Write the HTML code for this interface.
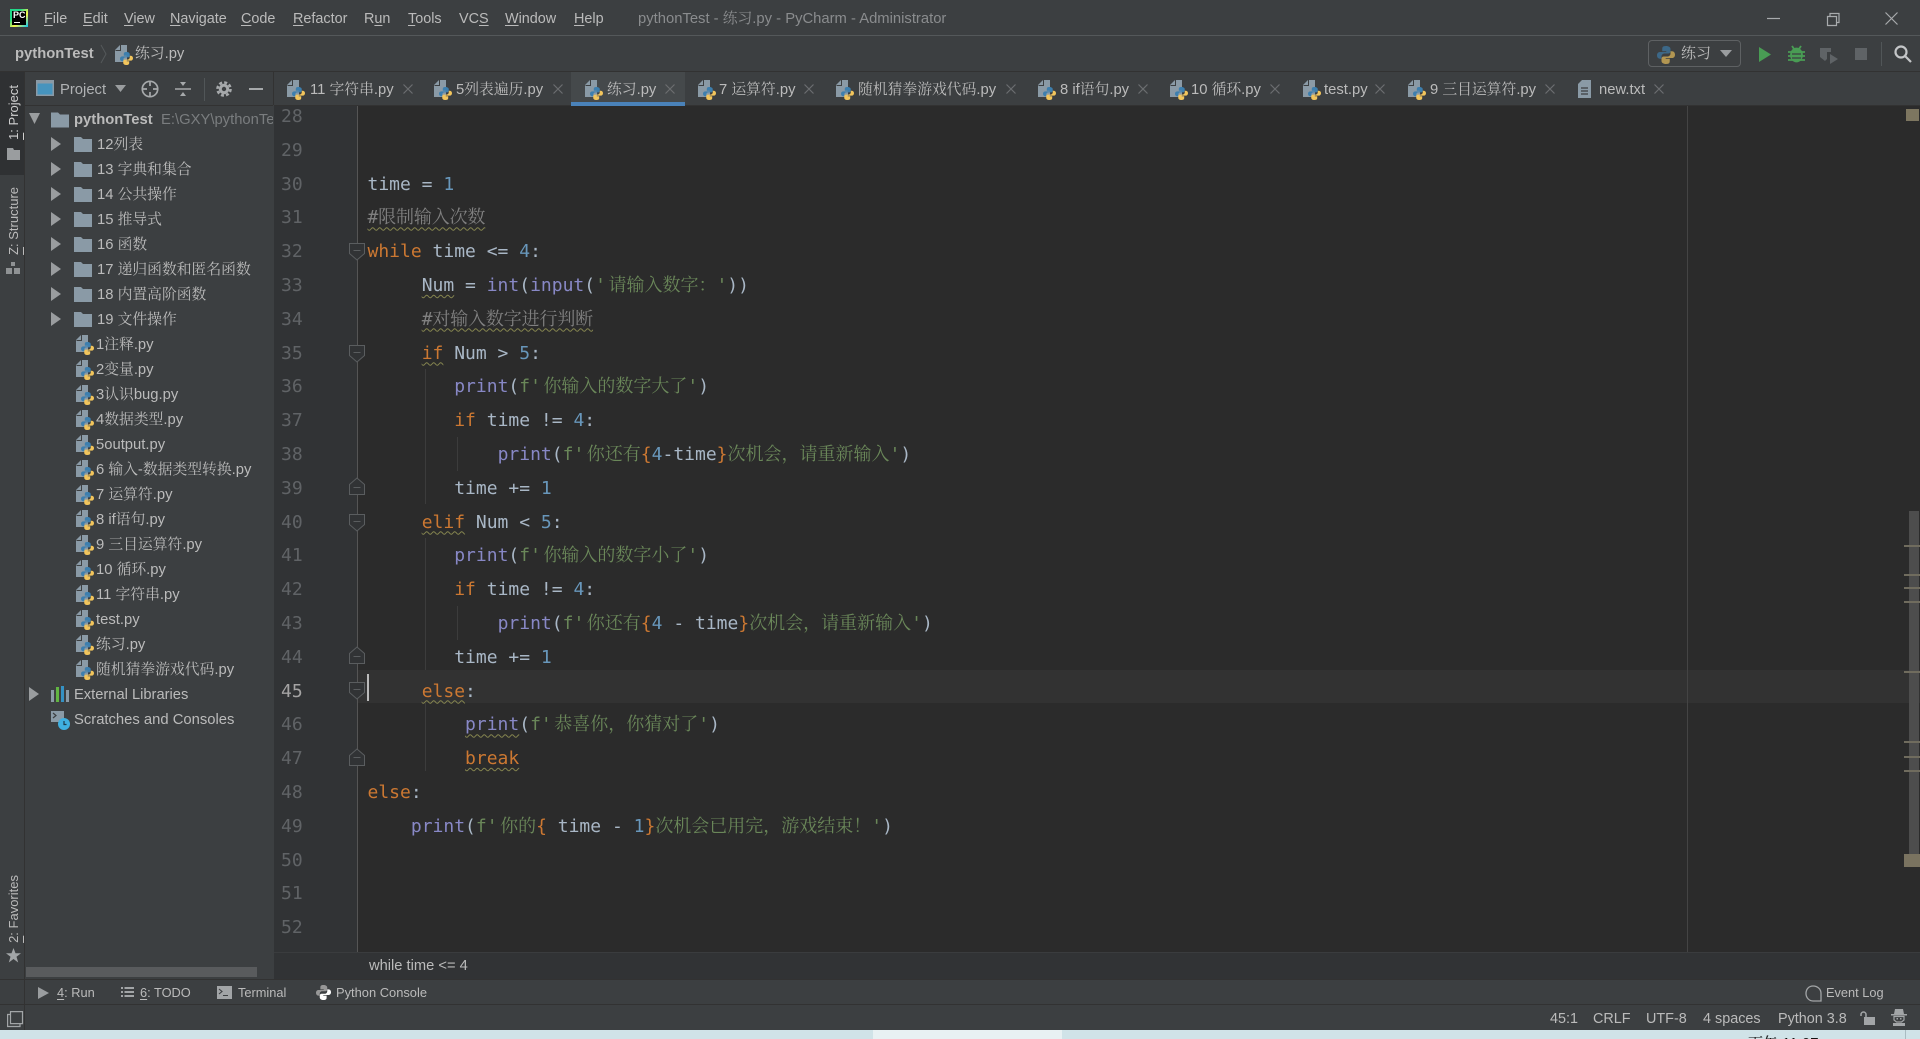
<!DOCTYPE html>
<html lang="zh-CN"><head><meta charset="utf-8"><title>pythonTest</title>
<style>
html,body{margin:0;padding:0;background:#3c3f41}
#r{position:relative;width:1920px;height:1039px;overflow:hidden;background:#3c3f41;font-family:"Liberation Sans","Noto Serif CJK SC",sans-serif;color:#bbb}
.a{position:absolute}
.t{position:absolute;white-space:pre;line-height:20px}
.m{font-size:14.4px;top:9px;color:#bbb}
.u{text-decoration:underline;text-decoration-thickness:1px;text-underline-offset:2px}
.tab{font-size:14.8px;top:79.5px;color:#bbb}
.tr{font-size:14.8px;color:#bbb;top:calc(110px + 25px*var(--i))}
.b{font-size:12.8px;top:983px;color:#bbb}
.s{font-size:14.4px;top:1008.5px;color:#bbb}
.ln{position:absolute;left:281px;font:18px/34px "DejaVu Sans Mono",monospace;color:#606366;top:calc(167.5px + 33.8px*(var(--n) - 30))}
.c{position:absolute;white-space:pre;font:18px/34px "DejaVu Sans Mono","Noto Serif CJK SC",monospace;color:#a9b7c6;top:calc(167.5px + 33.8px*(var(--n) - 30));left:calc(367.5px + 10.84px*var(--x))}
.k{color:#cc7832}.n{color:#6897bb}.f{color:#8888c6}.g{color:#6a8759}.h{color:#808080;letter-spacing:-.15px}
.q{margin-right:2.5px}
.w{text-decoration:underline wavy #85854f 1px;text-underline-offset:3px}
.v{position:absolute;writing-mode:vertical-rl;transform:rotate(180deg);font-size:13px;line-height:16px;white-space:pre;color:#bbb;left:6px}
svg{position:absolute;overflow:visible}
</style></head><body><div id="r">
<svg width="0" height="0" style="left:0;top:0"><defs>
<symbol id="py" viewBox="0 0 12 12" overflow="visible"><path fill="#3d7fae" d="M6 0C3.5 0 3.5 1 3.5 2.5V3.5H6.2V4H2C.7 4 0 5 0 6.2 0 7.5.7 8.5 2 8.5H3V7C3 5.8 4 5 5 5H7.5C8.3 5 9 4.4 9 3.5V2C9 .8 7.7 0 6 0Z"/><path fill="#f2c55c" d="M6 12C8.500 12 8.500 11 8.500 9.500V8.500H5.800V8H10C11.300 8 12 7 12 5.800 12 4.500 11.300 3.500 10 3.500H9V5C9 6.200 8 7 7 7H4.500C3.700 7 3 7.600 3 8.500V10C3 11.200 4.300 12 6 12Z"/></symbol>
<symbol id="pf" viewBox="0 0 18 20" overflow="visible"><path fill="#8a9aa6" d="M0 5L5 0H12V17H0Z"/><path fill="#3c3f41" d="M5 0V5H0L1 6H6V0Z"/><use href="#py" x="5" y="7" width="13" height="13"/></symbol>
<symbol id="fd" viewBox="0 0 18 16"><path fill="#8a9aa6" d="M0 1H7L9 3H18V16H0Z"/></symbol>
<symbol id="x" viewBox="0 0 10 10"><path stroke="#6b6e70" stroke-width="1.200" fill="none" d="M.5 .5L9.500 9.500M9.500 .5L.5 9.500"/></symbol>
<symbol id="ar" viewBox="0 0 10 14"><path fill="#9a9d9f" d="M0 0L10 7L0 14Z"/></symbol>
</defs></svg>

<!-- title bar -->
<div class="a" style="left:0;top:35px;width:1920px;height:1px;background:#54585a"></div>
<div class="a" style="left:10px;top:9px;width:18px;height:18px;background:linear-gradient(135deg,#21d789 0%,#21d789 30%,#fcf84a 60%,#07c3f2 100%)"></div>
<div class="a" style="left:12px;top:11px;width:14px;height:14px;background:#000"></div>
<div class="t" style="left:13px;top:9px;font-size:9px;font-weight:bold;color:#fff;line-height:12px">PC</div>
<div class="a" style="left:14px;top:22px;width:6px;height:1px;background:#fff"></div>
<span class="t m" style="left:44px"><span class="u">F</span>ile</span>
<span class="t m" style="left:83px"><span class="u">E</span>dit</span>
<span class="t m" style="left:124px"><span class="u">V</span>iew</span>
<span class="t m" style="left:170px"><span class="u">N</span>avigate</span>
<span class="t m" style="left:241px"><span class="u">C</span>ode</span>
<span class="t m" style="left:293px"><span class="u">R</span>efactor</span>
<span class="t m" style="left:364px">R<span class="u">u</span>n</span>
<span class="t m" style="left:408px"><span class="u">T</span>ools</span>
<span class="t m" style="left:459px">VC<span class="u">S</span></span>
<span class="t m" style="left:505px"><span class="u">W</span>indow</span>
<span class="t m" style="left:574px"><span class="u">H</span>elp</span>
<span class="t m" style="left:638px;color:#8a8c8e;font-size:14.8px">pythonTest - 练习.py - PyCharm - Administrator</span>
<svg style="left:1767px;top:12px" width="150" height="14" fill="none" stroke="#a8abad" stroke-width="1.200"><path d="M0 6.500H13"/><path d="M60.500 4.500h9v9h-9zM63 4.500v-3h9v9h-2.500"/><path d="M118.500 .5L130.500 12.500M130.500 .5L118.500 12.500"/></svg>

<!-- nav bar -->
<div class="a" style="left:0;top:71px;width:1920px;height:1px;background:#323232"></div>
<span class="t" style="left:15px;top:44px;font-size:14.8px;font-weight:bold;color:#bbb">pythonTest</span>
<svg style="left:100px;top:45px" width="8" height="18" fill="none" stroke="#55595b"><path d="M1 0L6 9L1 18"/></svg>
<svg style="left:115px;top:45px" width="18" height="20"><use href="#pf" width="18" height="20"/></svg>
<span class="t" style="left:135px;top:44px;font-size:14.8px">练习.py</span>
<div class="a" style="left:1648px;top:40px;width:91px;height:25px;border:1px solid #5e6163;border-radius:4px"></div>
<svg style="left:1657px;top:46px;opacity:.65" width="18" height="18"><use href="#py" width="18" height="18"/></svg>
<span class="t" style="left:1681px;top:44px;font-size:15px">练习</span>
<svg style="left:1720px;top:50px" width="12" height="8"><path fill="#9a9d9f" d="M0 0H12L6 7Z"/></svg>
<svg style="left:1759px;top:47px" width="12" height="15"><path fill="#499c54" d="M0 0L12 7.500L0 15Z"/></svg>
<svg style="left:1788px;top:45px" width="17" height="18" fill="none" stroke="#499c54" stroke-width="1.800"><ellipse cx="8.500" cy="10" rx="5.500" ry="6.500" fill="#499c54"/><path d="M4 1L6 4M13 1L11 4M0 7H17M0 11H17M0 15H17"/><path stroke="#3c3f41" stroke-width="1.200" d="M4 9H13M4 13H13"/></svg>
<svg style="left:1820px;top:47px" width="19" height="17"><path fill="#5f6366" d="M0 1H11V5H7V12L5 14L0 10Z"/><path fill="#5f6366" d="M10 7L18 12L10 17Z"/></svg>
<div class="a" style="left:1855px;top:48px;width:12px;height:12px;background:#5f6366"></div>
<div class="a" style="left:1881px;top:42px;width:1px;height:24px;background:#515658"></div>
<svg style="left:1894px;top:45px" width="18" height="18" fill="none" stroke="#c4c6c8" stroke-width="2.200"><circle cx="7" cy="7" r="5.500"/><path d="M11 11L17 17"/></svg>

<!-- left stripe -->
<div class="a" style="left:0;top:72px;width:24px;height:960px;border-right:1px solid #323232"></div>
<div class="a" style="left:0;top:72px;width:24px;height:103px;background:#2f3133"></div>
<span class="v" style="top:85px;color:#d0d0d0"><span class="u">1</span>: Project</span>
<svg style="left:7px;top:148px" width="13" height="12"><path fill="#9a9d9f" d="M0 0H6L7 2H13V12H0Z"/></svg>
<span class="v" style="top:187px"><span class="u">Z</span>: Structure</span>
<svg style="left:6px;top:262px" width="14" height="13" fill="#8f9294"><rect x="5" y="0" width="4" height="4"/><rect x="0" y="6" width="6" height="6"/><rect x="8" y="6" width="6" height="6"/></svg>
<span class="v" style="top:875px"><span class="u">2</span>: Favorites</span>
<svg style="left:6px;top:948px" width="15" height="15"><path fill="#a2a5a7" d="M7.500 0L9.500 5.300H15L10.500 8.700L12.200 14.500L7.500 11L2.800 14.500L4.500 8.700L0 5.300H5.500Z"/></svg>

<!-- project panel -->
<div class="a" style="left:25px;top:105px;width:248px;height:1px;background:#323232"></div>
<svg style="left:36px;top:80px" width="18" height="16"><rect width="18" height="16" fill="#8a9aa6"/><rect x="1.500" y="3.500" width="15" height="11" fill="#3592c4" opacity=".8"/></svg>
<span class="t" style="left:60px;top:79.5px;font-size:14.8px;color:#b0b2b4">Project</span>
<svg style="left:115px;top:85px" width="11" height="7"><path fill="#9a9d9f" d="M0 0H11L5.500 7Z"/></svg>
<svg style="left:141px;top:80px" width="18" height="18" fill="none" stroke="#a6a9ab" stroke-width="1.700"><circle cx="9" cy="9" r="7.700"/><path d="M9 1V6M9 12V17M1 9H6M12 9H17"/></svg>
<svg style="left:175px;top:81px" width="16" height="16"><path stroke="#a6a9ab" stroke-width="1.500" d="M0 8H16"/><path fill="#a6a9ab" d="M5 1H11L8 5ZM5 15H11L8 11Z"/></svg>
<div class="a" style="left:204px;top:78px;width:1px;height:23px;background:#515658"></div>
<svg style="left:216px;top:81px" width="16" height="16" fill="none"><circle cx="8" cy="8" r="3.700" stroke="#a6a9ab" stroke-width="3"/><circle cx="8" cy="8" r="6.500" stroke="#a6a9ab" stroke-width="2.600" stroke-dasharray="3 2.100"/></svg>
<div class="a" style="left:249px;top:88px;width:14px;height:2px;background:#a6a9ab"></div>

<div class="a" style="left:273px;top:72px;width:1px;height:33px;background:#323232"></div>
<svg style="left:29px;top:113px" width="11" height="11"><path fill="#9a9d9f" d="M0 0H11L5.500 11Z"/></svg>
<svg style="left:51px;top:111px" width="18" height="17"><use href="#fd" width="18" height="17"/></svg>
<span class="t tr" style="--i:0;left:74px;font-weight:bold">pythonTest</span>
<div class="a" style="left:161px;top:110px;width:112px;height:22px;overflow:hidden"><span class="t" style="left:0;top:0;font-size:14.8px;color:#7a7d7f">E:\GXY\pythonTest</span></div>

<svg style="left:51px;top:137px" width="10" height="14"><use href="#ar" width="10" height="14"/></svg><svg style="left:74px;top:136px" width="18" height="16"><use href="#fd" width="18" height="16"/></svg><span class="t tr" style="--i:1;left:97px">12列表</span>
<svg style="left:51px;top:162px" width="10" height="14"><use href="#ar" width="10" height="14"/></svg><svg style="left:74px;top:161px" width="18" height="16"><use href="#fd" width="18" height="16"/></svg><span class="t tr" style="--i:2;left:97px">13 字典和集合</span>
<svg style="left:51px;top:187px" width="10" height="14"><use href="#ar" width="10" height="14"/></svg><svg style="left:74px;top:186px" width="18" height="16"><use href="#fd" width="18" height="16"/></svg><span class="t tr" style="--i:3;left:97px">14 公共操作</span>
<svg style="left:51px;top:212px" width="10" height="14"><use href="#ar" width="10" height="14"/></svg><svg style="left:74px;top:211px" width="18" height="16"><use href="#fd" width="18" height="16"/></svg><span class="t tr" style="--i:4;left:97px">15 推导式</span>
<svg style="left:51px;top:237px" width="10" height="14"><use href="#ar" width="10" height="14"/></svg><svg style="left:74px;top:236px" width="18" height="16"><use href="#fd" width="18" height="16"/></svg><span class="t tr" style="--i:5;left:97px">16 函数</span>
<svg style="left:51px;top:262px" width="10" height="14"><use href="#ar" width="10" height="14"/></svg><svg style="left:74px;top:261px" width="18" height="16"><use href="#fd" width="18" height="16"/></svg><span class="t tr" style="--i:6;left:97px">17 递归函数和匿名函数</span>
<svg style="left:51px;top:287px" width="10" height="14"><use href="#ar" width="10" height="14"/></svg><svg style="left:74px;top:286px" width="18" height="16"><use href="#fd" width="18" height="16"/></svg><span class="t tr" style="--i:7;left:97px">18 内置高阶函数</span>
<svg style="left:51px;top:312px" width="10" height="14"><use href="#ar" width="10" height="14"/></svg><svg style="left:74px;top:311px" width="18" height="16"><use href="#fd" width="18" height="16"/></svg><span class="t tr" style="--i:8;left:97px">19 文件操作</span>

<svg style="left:76px;top:335px" width="18" height="20"><use href="#pf" width="18" height="20"/></svg><span class="t tr" style="--i:9;left:96px">1注释.py</span>
<svg style="left:76px;top:360px" width="18" height="20"><use href="#pf" width="18" height="20"/></svg><span class="t tr" style="--i:10;left:96px">2变量.py</span>
<svg style="left:76px;top:385px" width="18" height="20"><use href="#pf" width="18" height="20"/></svg><span class="t tr" style="--i:11;left:96px">3认识bug.py</span>
<svg style="left:76px;top:410px" width="18" height="20"><use href="#pf" width="18" height="20"/></svg><span class="t tr" style="--i:12;left:96px">4数据类型.py</span>
<svg style="left:76px;top:435px" width="18" height="20"><use href="#pf" width="18" height="20"/></svg><span class="t tr" style="--i:13;left:96px">5output.py</span>
<svg style="left:76px;top:460px" width="18" height="20"><use href="#pf" width="18" height="20"/></svg><span class="t tr" style="--i:14;left:96px">6 输入-数据类型转换.py</span>
<svg style="left:76px;top:485px" width="18" height="20"><use href="#pf" width="18" height="20"/></svg><span class="t tr" style="--i:15;left:96px">7 运算符.py</span>
<svg style="left:76px;top:510px" width="18" height="20"><use href="#pf" width="18" height="20"/></svg><span class="t tr" style="--i:16;left:96px">8 if语句.py</span>
<svg style="left:76px;top:535px" width="18" height="20"><use href="#pf" width="18" height="20"/></svg><span class="t tr" style="--i:17;left:96px">9 三目运算符.py</span>
<svg style="left:76px;top:560px" width="18" height="20"><use href="#pf" width="18" height="20"/></svg><span class="t tr" style="--i:18;left:96px">10 循环.py</span>
<svg style="left:76px;top:585px" width="18" height="20"><use href="#pf" width="18" height="20"/></svg><span class="t tr" style="--i:19;left:96px">11 字符串.py</span>
<svg style="left:76px;top:610px" width="18" height="20"><use href="#pf" width="18" height="20"/></svg><span class="t tr" style="--i:20;left:96px">test.py</span>
<svg style="left:76px;top:635px" width="18" height="20"><use href="#pf" width="18" height="20"/></svg><span class="t tr" style="--i:21;left:96px">练习.py</span>
<svg style="left:76px;top:660px" width="18" height="20"><use href="#pf" width="18" height="20"/></svg><span class="t tr" style="--i:22;left:96px">随机猜拳游戏代码.py</span>

<svg style="left:29px;top:687px" width="10" height="14"><use href="#ar" width="10" height="14"/></svg>
<svg style="left:51px;top:686px" width="18" height="16"><rect x="0" y="4" width="3" height="12" fill="#8a9aa6"/><rect x="5" y="1" width="3" height="15" fill="#62b543"/><rect x="10" y="0" width="3" height="16" fill="#3592c4"/><rect x="15" y="4" width="3" height="12" fill="#8a9aa6"/></svg>
<span class="t tr" style="--i:23;left:74px;font-size:14.7px">External Libraries</span>
<svg style="left:51px;top:711px" width="19" height="19"><rect width="13" height="11" fill="#8a9aa6"/><path stroke="#3c3f41" fill="none" stroke-width="1.200" d="M2 2L5 4.500L2 7"/><circle cx="13" cy="13" r="6" fill="#3fb0e0"/><path stroke="#1d3c4d" stroke-width="1.200" fill="none" d="M13 10V13.500H15.500"/></svg>
<span class="t tr" style="--i:24;left:74px">Scratches and Consoles</span>
<div class="a" style="left:26px;top:967px;width:231px;height:10px;background:#595b5d"></div>

<!-- tabs -->
<div class="a" style="left:274px;top:105px;width:1646px;height:1px;background:#323232"></div>
<div class="a" style="left:571px;top:72px;width:114px;height:30px;background:#45494b"></div>
<div class="a" style="left:571px;top:102px;width:114px;height:4px;background:#4a82b9"></div>
<svg style="left:287px;top:80px" width="18" height="20"><use href="#pf" width="18" height="20"/></svg><span class="t tab" style="left:310px">11 字符串.py</span><svg style="left:403px;top:84px" width="10" height="10"><use href="#x" width="10" height="10"/></svg>
<svg style="left:434px;top:80px" width="18" height="20"><use href="#pf" width="18" height="20"/></svg><span class="t tab" style="left:456px">5列表遍历.py</span><svg style="left:553px;top:84px" width="10" height="10"><use href="#x" width="10" height="10"/></svg>
<svg style="left:585px;top:80px" width="18" height="20"><use href="#pf" width="18" height="20"/></svg><span class="t tab" style="left:607px">练习.py</span><svg style="left:665px;top:84px" width="10" height="10"><use href="#x" width="10" height="10"/></svg>
<svg style="left:698px;top:80px" width="18" height="20"><use href="#pf" width="18" height="20"/></svg><span class="t tab" style="left:719px">7 运算符.py</span><svg style="left:804px;top:84px" width="10" height="10"><use href="#x" width="10" height="10"/></svg>
<svg style="left:836px;top:80px" width="18" height="20"><use href="#pf" width="18" height="20"/></svg><span class="t tab" style="left:858px">随机猜拳游戏代码.py</span><svg style="left:1006px;top:84px" width="10" height="10"><use href="#x" width="10" height="10"/></svg>
<svg style="left:1038px;top:80px" width="18" height="20"><use href="#pf" width="18" height="20"/></svg><span class="t tab" style="left:1060px">8 if语句.py</span><svg style="left:1138px;top:84px" width="10" height="10"><use href="#x" width="10" height="10"/></svg>
<svg style="left:1170px;top:80px" width="18" height="20"><use href="#pf" width="18" height="20"/></svg><span class="t tab" style="left:1191px">10 循环.py</span><svg style="left:1270px;top:84px" width="10" height="10"><use href="#x" width="10" height="10"/></svg>
<svg style="left:1303px;top:80px" width="18" height="20"><use href="#pf" width="18" height="20"/></svg><span class="t tab" style="left:1324px">test.py</span><svg style="left:1375px;top:84px" width="10" height="10"><use href="#x" width="10" height="10"/></svg>
<svg style="left:1408px;top:80px" width="18" height="20"><use href="#pf" width="18" height="20"/></svg><span class="t tab" style="left:1430px">9 三目运算符.py</span><svg style="left:1545px;top:84px" width="10" height="10"><use href="#x" width="10" height="10"/></svg>
<svg style="left:1578px;top:80px" width="13" height="18"><path fill="#8a9aa6" d="M0 4L4 0H13V18H0Z"/><path stroke="#3c3f41" stroke-width="1.200" d="M3 8H10M3 11H10M3 14H10"/></svg><span class="t tab" style="left:1599px">new.txt</span><svg style="left:1654px;top:84px" width="10" height="10"><use href="#x" width="10" height="10"/></svg>

<!-- editor -->
<div class="a" style="left:274px;top:106px;width:1646px;height:846px;background:#2b2b2b;overflow:hidden"></div>
<div class="a" style="left:274px;top:106px;width:83px;height:846px;background:#313335"></div>
<div class="a" style="left:358px;top:670px;width:1562px;height:33px;background:#323232"></div>
<div class="a" style="left:357px;top:106px;width:1px;height:846px;background:#555"></div>
<div class="a" style="left:1687px;top:106px;width:1px;height:846px;background:#444"></div>
<div class="a" style="left:425px;top:369px;width:1px;height:135px;background:#3c3c3c"></div>
<div class="a" style="left:425px;top:538px;width:1px;height:132px;background:#3c3c3c"></div>
<div class="a" style="left:425px;top:703px;width:1px;height:68px;background:#3c3c3c"></div>
<div class="a" style="left:457px;top:437px;width:1px;height:34px;background:#3c3c3c"></div>
<div class="a" style="left:457px;top:606px;width:1px;height:34px;background:#3c3c3c"></div>
<svg style="left:0;top:0" width="1920" height="1039" fill="#313335" stroke="#5a5d5f">
<path d="M349.500 243.500h15v10l-7.500 6.500l-7.500-6.500z"/><path d="M353.500 250.500h7"/>
<path d="M349.500 345.500h15v10l-7.500 6.500l-7.500-6.500z"/><path d="M353.500 352.500h7"/>
<path d="M349.500 514.500h15v10l-7.500 6.500l-7.500-6.500z"/><path d="M353.500 521.500h7"/>
<path d="M349.500 682.500h15v10l-7.500 6.500l-7.500-6.500z"/><path d="M353.500 689.500h7"/>
<path d="M349.500 494.500h15v-10l-7.500-6.500l-7.500 6.500z"/><path d="M353.500 487.500h7"/>
<path d="M349.500 663.500h15v-10l-7.500-6.500l-7.500 6.500z"/><path d="M353.500 656.500h7"/>
<path d="M349.500 765.500h15v-10l-7.500-6.500l-7.500 6.500z"/><path d="M353.500 757.500h7"/>
</svg>
<div class="a" style="left:367px;top:674px;width:2px;height:27px;background:#bbb"></div>

<span class="ln" style="--n:28">28</span><span class="ln" style="--n:29">29</span><span class="ln" style="--n:30">30</span><span class="ln" style="--n:31">31</span><span class="ln" style="--n:32">32</span><span class="ln" style="--n:33">33</span><span class="ln" style="--n:34">34</span><span class="ln" style="--n:35">35</span><span class="ln" style="--n:36">36</span><span class="ln" style="--n:37">37</span><span class="ln" style="--n:38">38</span><span class="ln" style="--n:39">39</span><span class="ln" style="--n:40">40</span><span class="ln" style="--n:41">41</span><span class="ln" style="--n:42">42</span><span class="ln" style="--n:43">43</span><span class="ln" style="--n:44">44</span><span class="ln" style="--n:45;color:#a4a3a3">45</span><span class="ln" style="--n:46">46</span><span class="ln" style="--n:47">47</span><span class="ln" style="--n:48">48</span><span class="ln" style="--n:49">49</span><span class="ln" style="--n:50">50</span><span class="ln" style="--n:51">51</span><span class="ln" style="--n:52">52</span>

<div class="c" style="--n:30;--x:0">time = <span class="n">1</span></div>
<div class="c" style="--n:31;--x:0"><span class="h w">#限制输入次数</span></div>
<div class="c" style="--n:32;--x:0"><span class="k">while</span> time &lt;= <span class="n">4</span>:</div>
<div class="c" style="--n:33;--x:5"><span class="w">Num</span> = <span class="f">int</span>(<span class="f">input</span>(<span class="g"><span class="q">'</span>请输入数字：'</span>))</div>
<div class="c" style="--n:34;--x:5"><span class="h w">#对输入数字进行判断</span></div>
<div class="c" style="--n:35;--x:5"><span class="k w">if</span> Num &gt; <span class="n">5</span>:</div>
<div class="c" style="--n:36;--x:8"><span class="f">print</span>(<span class="g">f<span class="q">'</span>你输入的数字大了'</span>)</div>
<div class="c" style="--n:37;--x:8"><span class="k">if</span> time != <span class="n">4</span>:</div>
<div class="c" style="--n:38;--x:12"><span class="f">print</span>(<span class="g">f<span class="q">'</span>你还有</span><span class="k">{</span><span class="n">4</span>-time<span class="k">}</span><span class="g">次机会，请重新输入'</span>)</div>
<div class="c" style="--n:39;--x:8">time += <span class="n">1</span></div>
<div class="c" style="--n:40;--x:5"><span class="k w">elif</span> Num &lt; <span class="n">5</span>:</div>
<div class="c" style="--n:41;--x:8"><span class="f">print</span>(<span class="g">f<span class="q">'</span>你输入的数字小了'</span>)</div>
<div class="c" style="--n:42;--x:8"><span class="k">if</span> time != <span class="n">4</span>:</div>
<div class="c" style="--n:43;--x:12"><span class="f">print</span>(<span class="g">f<span class="q">'</span>你还有</span><span class="k">{</span><span class="n">4</span> - time<span class="k">}</span><span class="g">次机会，请重新输入'</span>)</div>
<div class="c" style="--n:44;--x:8">time += <span class="n">1</span></div>
<div class="c" style="--n:45;--x:5"><span class="k w">else</span>:</div>
<div class="c" style="--n:46;--x:9"><span class="f w">print</span>(<span class="g">f<span class="q">'</span>恭喜你，你猜对了'</span>)</div>
<div class="c" style="--n:47;--x:9"><span class="k w">break</span></div>
<div class="c" style="--n:48;--x:0"><span class="k">else</span>:</div>
<div class="c" style="--n:49;--x:4"><span class="f">print</span>(<span class="g">f<span class="q">'</span>你的</span><span class="k">{</span> time - <span class="n">1</span><span class="k">}</span><span class="g">次机会已用完，游戏结束！'</span>)</div>

<!-- right stripe -->
<div class="a" style="left:1906px;top:109px;width:13px;height:12px;background:#7d7660"></div>
<div class="a" style="left:1909px;top:511px;width:10px;height:349px;background:#4d4d4d"></div>
<div class="a" style="left:1904px;top:545px;width:16px;height:2px;background:#706c5e"></div>
<div class="a" style="left:1904px;top:574px;width:16px;height:2px;background:#706c5e"></div>
<div class="a" style="left:1904px;top:587px;width:16px;height:2px;background:#706c5e"></div>
<div class="a" style="left:1904px;top:601px;width:16px;height:2px;background:#706c5e"></div>
<div class="a" style="left:1904px;top:671px;width:16px;height:2px;background:#706c5e"></div>
<div class="a" style="left:1904px;top:741px;width:16px;height:2px;background:#706c5e"></div>
<div class="a" style="left:1904px;top:756px;width:16px;height:2px;background:#706c5e"></div>
<div class="a" style="left:1904px;top:770px;width:16px;height:2px;background:#706c5e"></div>
<div class="a" style="left:1904px;top:854px;width:16px;height:13px;background:#7a7360"></div>

<!-- breadcrumb -->
<div class="a" style="left:274px;top:952px;width:1646px;height:27px;background:#313335;border-top:1px solid #3a3c3e;box-sizing:border-box"></div>
<span class="t" style="left:369px;top:956px;font-size:14.7px;color:#bbb">while time &lt;= 4</span>

<!-- tool window bar -->
<div class="a" style="left:0;top:979px;width:1920px;height:1px;background:#323232"></div>
<svg style="left:38px;top:987px" width="11" height="12"><path fill="#9a9d9f" d="M0 0L11 6L0 12Z"/></svg>
<span class="t b" style="left:57px"><span class="u">4</span>: Run</span>
<svg style="left:121px;top:987px" width="13" height="11" fill="#a2a5a7"><rect width="2" height="2" y="0"/><rect width="2" height="2" y="4"/><rect width="2" height="2" y="8"/><rect x="3.500" width="9.500" height="2" y="0"/><rect x="3.500" width="9.500" height="2" y="4"/><rect x="3.500" width="9.500" height="2" y="8"/></svg>
<span class="t b" style="left:140px"><span class="u">6</span>: TODO</span>
<svg style="left:217px;top:986px" width="15" height="13"><rect width="15" height="13" fill="#a2a5a7"/><path d="M2 3L5 5.500L2 8M6 9.500H11" stroke="#3c3f41" stroke-width="1.100" fill="none"/></svg>
<span class="t b" style="left:238px">Terminal</span>
<svg style="left:316px;top:985px;filter:grayscale(1) brightness(1.300)" width="15" height="15"><use href="#py" width="15" height="15"/></svg>
<span class="t b" style="left:336px;font-size:12.9px">Python Console</span>
<svg style="left:1805px;top:985px" width="17" height="17" fill="none" stroke="#a2a5a7" stroke-width="1.300"><path d="M8 1C4 1 1 4 1 8.500 1 12.500 4 16 8 16H16V8.500C16 4 12.500 1 8 1Z"/></svg>
<span class="t b" style="left:1826px">Event Log</span>

<!-- status bar -->
<div class="a" style="left:0;top:1004px;width:1920px;height:1px;background:#323232"></div>
<svg style="left:7px;top:1011px" width="16" height="16" fill="none" stroke="#a2a5a7" stroke-width="1.200"><path d="M3.500 .6h12v12h-12z"/><path d="M3 3.500H.6V15.500H13V13"/></svg>
<span class="t s" style="left:1550px">45:1</span>
<span class="t s" style="left:1593px">CRLF</span>
<span class="t s" style="left:1646px">UTF-8</span>
<span class="t s" style="left:1703px">4 spaces</span>
<span class="t s" style="left:1778px">Python 3.8</span>
<svg style="left:1860px;top:1011px" width="15" height="14"><rect x="4" y="6" width="11" height="8" fill="#a2a5a7"/><path d="M1 5V3.500A2.500 2.500 0 0 1 6 3.500V6" fill="none" stroke="#a2a5a7" stroke-width="1.500"/></svg>
<svg style="left:1891px;top:1009px" width="16" height="17" fill="#a2a5a7"><path d="M4 0H12L13 5H16V6.500H0V5H3Z"/><path d="M3 7.500H13V11L10.500 13H5.500L3 11Z" fill="none" stroke="#a2a5a7" stroke-width="1.200"/><rect x="5.500" y="9" width="1.500" height="1.500"/><rect x="9" y="9" width="1.500" height="1.500"/><rect x="2" y="14" width="12" height="3"/></svg>

<!-- taskbar sliver -->
<div class="a" style="left:0;top:1030px;width:1920px;height:9px;background:#d0e3e8;overflow:hidden">
<div class="a" style="left:873px;top:0;width:189px;height:9px;background:#e8f1f3"></div>
<div class="a" style="left:1905px;top:0;width:1px;height:9px;background:#a9bcc2"></div>
<span class="t" style="left:1748px;top:3.5px;font-size:15px;color:#111;line-height:20px">下午 11:07</span>
</div>
</div></body></html>
